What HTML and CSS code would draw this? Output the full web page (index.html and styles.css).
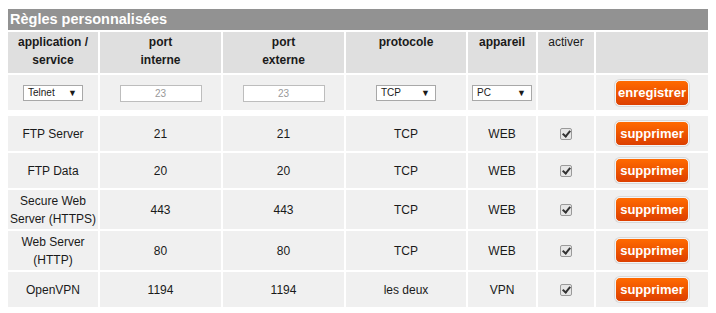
FILE: index.html
```html
<!DOCTYPE html>
<html lang="fr">
<head>
    <meta charset="UTF-8">
    <title>Règles personnalisées</title>
    <link rel="stylesheet" href="styles.css">
</head>
<body>
    <div class="panel">
        <h2 class="panel-title">Règles personnalisées</h2>
        <table class="rules">
            <colgroup>
                <col class="c-app">
                <col class="c-port">
                <col class="c-port">
                <col class="c-proto">
                <col class="c-dev">
                <col class="c-act">
                <col>
            </colgroup>
            <thead>
                <tr>
                    <th>application /<br>service</th>
                    <th>port<br>interne</th>
                    <th>port<br>externe</th>
                    <th>protocole</th>
                    <th>appareil</th>
                    <th class="light">activer</th>
                    <th></th>
                </tr>
            </thead>
            <tbody>
                <tr class="new-rule">
                    <td><span class="select w-app">Telnet<i>&#9660;</i></span></td>
                    <td><input class="port" type="text" placeholder="23"></td>
                    <td><input class="port" type="text" placeholder="23"></td>
                    <td><span class="select">TCP<i>&#9660;</i></span></td>
                    <td><span class="select">PC<i>&#9660;</i></span></td>
                    <td></td>
                    <td><button class="btn tall">enregistrer</button></td>
                </tr>
                <tr class="spacer"><td colspan="7"></td></tr>
            </tbody>
            <tbody class="list">
                <tr>
                    <td>FTP Server</td>
                    <td>21</td>
                    <td>21</td>
                    <td>TCP</td>
                    <td>WEB</td>
                    <td><span class="check"></span></td>
                    <td><button class="btn">supprimer</button></td>
                </tr>
                <tr>
                    <td>FTP Data</td>
                    <td>20</td>
                    <td>20</td>
                    <td>TCP</td>
                    <td>WEB</td>
                    <td><span class="check"></span></td>
                    <td><button class="btn">supprimer</button></td>
                </tr>
                <tr class="two">
                    <td>Secure Web<br>Server (HTTPS)</td>
                    <td>443</td>
                    <td>443</td>
                    <td>TCP</td>
                    <td>WEB</td>
                    <td><span class="check"></span></td>
                    <td><button class="btn">supprimer</button></td>
                </tr>
                <tr class="two">
                    <td>Web Server<br>(HTTP)</td>
                    <td>80</td>
                    <td>80</td>
                    <td>TCP</td>
                    <td>WEB</td>
                    <td><span class="check"></span></td>
                    <td><button class="btn">supprimer</button></td>
                </tr>
                <tr>
                    <td>OpenVPN</td>
                    <td>1194</td>
                    <td>1194</td>
                    <td>les deux</td>
                    <td>VPN</td>
                    <td><span class="check"></span></td>
                    <td><button class="btn">supprimer</button></td>
                </tr>
            </tbody>
        </table>
    </div>
</body>
</html>
```

FILE: styles.css
```css
body {
    margin: 0;
    padding: 9px 8px 0 8px;
    background: #fff;
    font-family: 'Liberation Sans', Arial, sans-serif;
    font-size: 12px;
    color: #1a1a1a;
}

.panel {
    width: 700px;
}

.panel-title {
    margin: 0;
    height: 21px;
    line-height: 21px;
    padding-left: 2px;
    background-color: #929292;
    color: #fff;
    font-size: 14.5px;
    font-weight: bold;
}

.rules {
    width: 700px;
    table-layout: fixed;
    border-collapse: separate;
    border-spacing: 0;
}

.c-app { width: 92px; }
.c-port { width: 123px; }
.c-proto { width: 122px; }
.c-dev { width: 70px; }
.c-act { width: 58px; }

.rules th,
.rules td {
    border-right: 2px solid #fff;
    border-top: 2px solid #fff;
    text-align: center;
    padding: 0;
}

.rules th:last-child,
.rules td:last-child {
    border-right: none;
}

.rules th {
    height: 40px;
    vertical-align: top;
    padding-top: 1px;
    background-color: #dfdfdf;
    font-weight: bold;
    line-height: 18px;
}

.rules th.light {
    font-weight: normal;
}

.rules td {
    background-color: #f0f0f0;
    line-height: 18px;
    vertical-align: middle;
}

.new-rule td {
    height: 35px;
}

.spacer td {
    height: 6px;
    background: #fff;
    border: none;
}

.list tr:first-child td {
    border-top: none;
}

.list td {
    height: 35px;
}

.list tr.two td {
    height: 39px;
}

.select {
    display: inline-block;
    position: relative;
    box-sizing: border-box;
    width: 60px;
    height: 16px;
    border: 1px solid #a8a8a8;
    background: #fff;
    font-size: 10px;
    line-height: 14px;
    text-align: left;
    padding-left: 4px;
    vertical-align: middle;
}

.select i {
    position: absolute;
    right: 5px;
    top: 0;
    font-style: normal;
    font-size: 9px;
}

.port {
    box-sizing: border-box;
    width: 82px;
    height: 17px;
    border: 1px solid #bdbdbd;
    padding: 0;
    font-family: inherit;
    font-size: 10px;
    text-align: center;
    vertical-align: middle;
}

.port::placeholder {
    color: #999;
}

.btn {
    box-sizing: border-box;
    width: 74px;
    height: 25px;
    padding: 0;
    border: 1px solid #f4f4f4;
    border-radius: 5px;
    box-shadow: 0 0 0 1px #d8d8d8;
    background: linear-gradient(#ff6a00, #dd3f00);
    color: #fff;
    font-family: inherit;
    font-size: 13px;
    font-weight: bold;
    vertical-align: middle;
    cursor: pointer;
}

.btn.tall {
    height: 26px;
}

.check {
    display: inline-block;
    position: relative;
    box-sizing: border-box;
    width: 12px;
    height: 12px;
    border: 1px solid #9a9a9a;
    border-radius: 2px;
    background: #e6e6e6;
    vertical-align: middle;
}

.check::after {
    content: "";
    position: absolute;
    left: 3px;
    top: 0px;
    width: 3px;
    height: 6px;
    border: solid #333;
    border-width: 0 2px 2px 0;
    transform: rotate(40deg);
}
```
